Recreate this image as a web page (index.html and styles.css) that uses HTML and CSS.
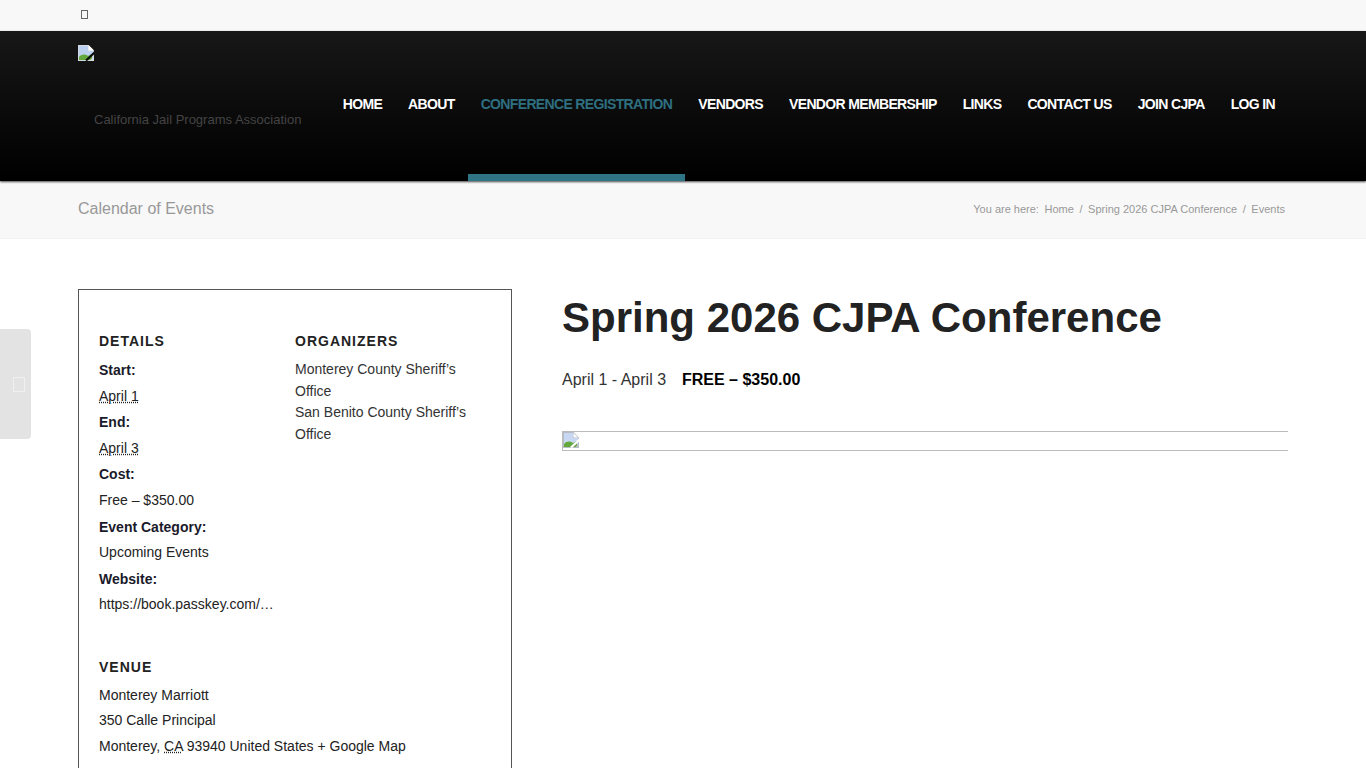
FILE: index.html
```html
<!DOCTYPE html>
<html lang="en">
<head>
    <meta charset="UTF-8">
    <meta name="viewport" content="width=device-width, initial-scale=1.0">
    <title>Spring 2026 CJPA Conference</title>
    <link rel="stylesheet" href="styles.css">
</head>
<body>

<div class="page">
    <div class="top-bar">
        <div class="container"><span class="tofu"></span></div>
    </div>

    <header class="main-header">
        <div class="container header-row">
            <div class="logo">
                <svg class="broken-img" viewBox="0 0 16 16" width="16" height="16">
                    <path d="M0 0H10.5L16 5.5V16H0Z" fill="#d4d8df"/>
                    <path d="M1 1H10V6H15V15H1Z" fill="#bcd0f0"/>
                    <path d="M1 15V12C4 9 7 9 10 11L14 9V15Z" fill="#62a83c"/>
                    <path d="M10.5 0V5.5H16Z" fill="#fff"/>
                    <path d="M17 7L8 15.5" fill="none" stroke="currentColor" stroke-width="2.2"/>
                    <path d="M16 11L11.5 16H16Z" fill="#d4d8df"/>
                </svg>
                <p class="tagline">California Jail Programs Association</p>
            </div>
            <nav>
                <ul class="menu">
                    <li>HOME</li>
                    <li>ABOUT</li>
                    <li class="active">CONFERENCE REGISTRATION</li>
                    <li>VENDORS</li>
                    <li>VENDOR MEMBERSHIP</li>
                    <li>LINKS</li>
                    <li>CONTACT US</li>
                    <li>JOIN CJPA</li>
                    <li>LOG IN</li>
                </ul>
            </nav>
        </div>
    </header>

    <div class="title-bar">
        <div class="container title-row">
            <span class="page-title">Calendar of Events</span>
            <div class="breadcrumb">
                <span>You are here:</span>
                <span>Home</span>
                <span>/</span>
                <span>Spring 2026 CJPA Conference</span>
                <span>/</span>
                <span>Events</span>
            </div>
        </div>
    </div>

    <div class="side-tab"><span class="tofu tofu-light"></span></div>

    <main class="container content">
        <aside class="meta-box">
            <div class="meta-cols">
                <div class="details">
                    <h3>DETAILS</h3>
                    <dl>
                        <dt>Start:</dt>
                        <dd><abbr>April 1</abbr></dd>
                        <dt>End:</dt>
                        <dd><abbr>April 3</abbr></dd>
                        <dt>Cost:</dt>
                        <dd>Free – $350.00</dd>
                        <dt class="nudge">Event Category:</dt>
                        <dd>Upcoming Events</dd>
                        <dt class="nudge">Website:</dt>
                        <dd class="url">https://book.passkey.com/…</dd>
                    </dl>
                </div>
                <div class="organizers">
                    <h3>ORGANIZERS</h3>
                    <p>Monterey County Sheriff’s Office</p>
                    <p>San Benito County Sheriff’s Office</p>
                </div>
            </div>
            <div class="venue">
                <h3>VENUE</h3>
                <p>Monterey Marriott</p>
                <p>350 Calle Principal</p>
                <p>Monterey, <abbr>CA</abbr> 93940 United States + Google Map</p>
            </div>
        </aside>

        <article class="event">
            <h1>Spring 2026 CJPA Conference</h1>
            <p class="event-when">April 1 - April 3 <strong>FREE – $350.00</strong></p>
            <div class="event-img">
                <svg class="broken-img" viewBox="0 0 16 16" width="16" height="16">
                    <path d="M0 0H10.5L16 5.5V16H0Z" fill="#b8bcc4"/>
                    <path d="M1 1H10V6H15V15H1Z" fill="#c8d8f2"/>
                    <path d="M1 15V12C4 9 7 9 10 11L14 9V15Z" fill="#62a83c"/>
                    <path d="M10.5 1V5.5H15Z" fill="#fff"/>
                    <path d="M17 7L8 15.5" fill="none" stroke="currentColor" stroke-width="2.2"/>
                    <path d="M16 11L11.5 16H16Z" fill="#b8bcc4"/>
                </svg>
            </div>
        </article>
    </main>
</div>

</body>
</html>
```

FILE: styles.css
```css
html, body {
    margin: 0;
    padding: 0;
}
body {
    font-family: "Liberation Sans", Arial, sans-serif;
    background-color: #fff;
    color: #222;
}
.page {
    position: relative;
    height: 768px;
    overflow: hidden;
}
.container {
    width: 1210px;
    margin: 0 auto;
}

/* top strip */
.top-bar {
    height: 31px;
    background-color: #f8f8f8;
}
.top-bar .container {
    height: 29px;
    display: flex;
    align-items: center;
    padding-left: 3px;
    box-sizing: border-box;
}
.tofu {
    display: inline-block;
    width: 5px;
    height: 7px;
    border: 1px solid #666;
}
.tofu-light {
    width: 10px;
    height: 13px;
    border-color: #f0f0f0;
}

/* header */
.main-header {
    height: 150px;
    background: linear-gradient(#171717, #000);
    box-shadow: 0 1px 2px rgba(0, 0, 0, 0.7);
    position: relative;
    color: #0c0c0c;
}
.header-row {
    display: flex;
    justify-content: space-between;
    height: 150px;
}
.logo {
    padding-top: 14px;
}
.broken-img {
    display: block;
}
.tagline {
    margin: 50px 0 0 16px;
    font-size: 13px;
    line-height: 18px;
    color: #444;
    white-space: nowrap;
}
.menu {
    list-style-type: none;
    display: flex;
    margin: 0;
    padding: 0;
}
.menu li {
    height: 143px;
    padding: 0 13px;
    line-height: 146px;
    font-size: 14px;
    font-weight: bold;
    letter-spacing: -0.65px;
    white-space: nowrap;
    color: #fff;
    border-bottom: 7px solid transparent;
}
.menu li.active {
    color: #2e6f80;
    border-bottom-color: #2e7484;
}

/* title strip */
.title-bar {
    height: 57px;
    background-color: #f8f8f8;
    border-bottom: 1px solid #f2f2f2;
}
.title-row {
    height: 55px;
    display: flex;
    justify-content: space-between;
    align-items: center;
}
.page-title {
    font-size: 16px;
    color: #999;
}
.breadcrumb {
    display: flex;
    gap: 5.6px;
    font-size: 11px;
    color: #999;
    padding-right: 3px;
}

/* left slide tab */
.side-tab {
    position: absolute;
    left: 0;
    top: 329px;
    width: 31px;
    height: 110px;
    background-color: #e3e3e3;
    border-radius: 0 4px 4px 0;
    display: flex;
    align-items: center;
    box-sizing: border-box;
    padding-left: 13px;
}

/* main content */
.content {
    display: flex;
    gap: 50px;
    padding-top: 50px;
}
.meta-box {
    flex: 0 0 434px;
    box-sizing: border-box;
    height: 600px;
    border: 1px solid #555;
    padding: 42px 20px 0;
    font-size: 14px;
}
.meta-cols {
    display: grid;
    grid-template-columns: 196px 1fr;
}
.meta-box h3 {
    margin: 0;
    font-size: 14px;
    line-height: 18px;
    letter-spacing: 1px;
    color: #222;
}
.details dl {
    margin: 7px 0 0;
}
.details dt {
    font-weight: bold;
    line-height: 26px;
    color: #1a1a2a;
}
.details dt.nudge {
    padding-top: 1px;
    margin-bottom: -1px;
}
.details dd {
    margin: 0;
    line-height: 26px;
    color: #222;
}
abbr {
    text-decoration: underline dotted;
}
.organizers h3 {
    margin-bottom: 9px;
}
.organizers p {
    margin: 0;
    line-height: 21.5px;
    color: #333;
}
.venue {
    margin-top: 41px;
}
.venue h3 {
    margin-bottom: 7px;
}
.venue p {
    margin: 0;
    line-height: 25.4px;
    color: #222;
}
.event {
    flex: 1;
}
.event h1 {
    margin: 1px 0 0;
    font-size: 42px;
    line-height: 56px;
    color: #222;
}
.event-when {
    margin: 22px 0 0;
    font-size: 16px;
    line-height: 24px;
    color: #333;
}
.event-when strong {
    color: #000;
    margin-left: 11.5px;
}
.event-img {
    margin-top: 39px;
    height: 18px;
    border: 1px solid #bbb;
    border-right: none;
    color: #fff;
}
```
